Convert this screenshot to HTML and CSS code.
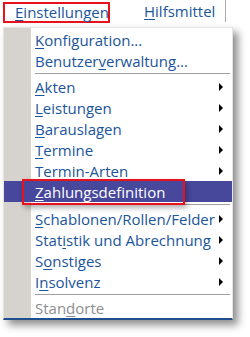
FILE: index.html
```html
<!DOCTYPE html>
<html lang="de">
<head>
    <meta charset="UTF-8">
    <title>Einstellungen</title>
    <link rel="stylesheet" href="styles.css">
</head>
<body>
    <!-- Menu bar -->
    <div class="menubar">
        <div class="menubar-item active"><u>E</u>instellungen</div>
        <div class="menubar-item"><u>H</u>ilfsmittel</div>
    </div>

    <!-- Dropdown -->
    <div class="menu">
        <div class="item"><span class="label"><u>K</u>onfiguration...</span></div>
        <div class="item"><span class="label">Benutzer<u>v</u>erwaltung...</span></div>
        <div class="separator"></div>
        <div class="item sub"><span class="label"><u>A</u>kten</span><span class="arrow"></span></div>
        <div class="item sub"><span class="label"><u>L</u>eistungen</span><span class="arrow"></span></div>
        <div class="item sub"><span class="label"><u>B</u>arauslagen</span><span class="arrow"></span></div>
        <div class="item sub"><span class="label"><u>T</u>ermine</span><span class="arrow"></span></div>
        <div class="item sub"><span class="label">T<u>e</u>rmin-Arten</span><span class="arrow"></span></div>
        <div class="item selected"><span class="label marked"><u>Z</u>ahlungsdefinition</span></div>
        <div class="separator wide"></div>
        <div class="item sub"><span class="label"><u>S</u>chablonen/Rollen/Felder</span><span class="arrow"></span></div>
        <div class="item sub"><span class="label">Stat<u>i</u>stik und Abrechnung</span><span class="arrow"></span></div>
        <div class="item sub"><span class="label">S<u>o</u>nstiges</span><span class="arrow"></span></div>
        <div class="item sub"><span class="label">I<u>n</u>solvenz</span><span class="arrow"></span></div>
        <div class="separator"></div>
        <div class="item disabled"><span class="label">Stan<u>d</u>orte</span></div>
    </div>
</body>
</html>
```

FILE: styles.css
```css
:root {
    --text-blue: #1b559b;
    --gutter: #d6d3ce;
    --highlight: #47479b;
    --marker: #e8121c;
}

body {
    margin: 0;
    width: 250px;
    height: 337px;
    overflow: hidden;
    background: #ffffff;
    font-family: 'Open Sans', 'Noto Sans', sans-serif;
    font-size: 15px;
    color: var(--text-blue);
}

u {
    text-decoration: underline;
    text-underline-offset: 2px;
}

/* Menu bar */
.menubar {
    height: 27px;
    display: flex;
    align-items: flex-start;
}

.menubar-item {
    height: 21px;
    line-height: 20px;
    margin-top: 2px;
    padding: 0 12px;
}

.menubar-item.active {
    margin-left: 3px;
    padding: 0 0 0 10px;
    width: 93px;
    border: 2px solid var(--marker);
    height: 17px;
    line-height: 16px;
}

.menubar-item + .menubar-item {
    margin-left: 20px;
    margin-top: 0;
    height: 22px;
    line-height: 23px;
    padding: 0 10px 0 14px;
    border-right: 1px solid #a8a8a8;
}

/* Dropdown menu */
.menu {
    margin-left: 3px;
    width: 228px;
    padding: 1px 0 0;
    border: 1px solid #e4e4e4;
    border-bottom: 2px solid #1f4f8c;
    background: linear-gradient(to right, var(--gutter) 27px, #ffffff 27px);
    box-shadow: 5px 5px 8px rgba(0, 0, 0, 0.45);
}

.item {
    height: 21px;
    display: flex;
    align-items: center;
    padding-left: 31px;
    padding-right: 9px;
}

.label {
    flex: 1;
    white-space: nowrap;
}

.arrow {
    width: 0;
    height: 0;
    border-top: 4px solid transparent;
    border-bottom: 4px solid transparent;
    border-left: 4px solid #000000;
}

.item.selected {
    background: var(--highlight);
    color: #ffffff;
}

.label.marked {
    flex: none;
    margin-left: -13px;
    padding: 1px 18px 1px 11px;
    border: 2px solid var(--marker);
    box-shadow: 2px 3px 5px rgba(0, 0, 0, 0.3);
}

.item.disabled {
    color: #8e8e8e;
}

.separator {
    height: 5px;
    margin-left: 31px;
    margin-right: 2px;
    background: linear-gradient(#ffffff 2px, #a0a0a0 2px, #a0a0a0 3px, #ffffff 3px);
}

.separator.wide {
    height: 6px;
}
```
